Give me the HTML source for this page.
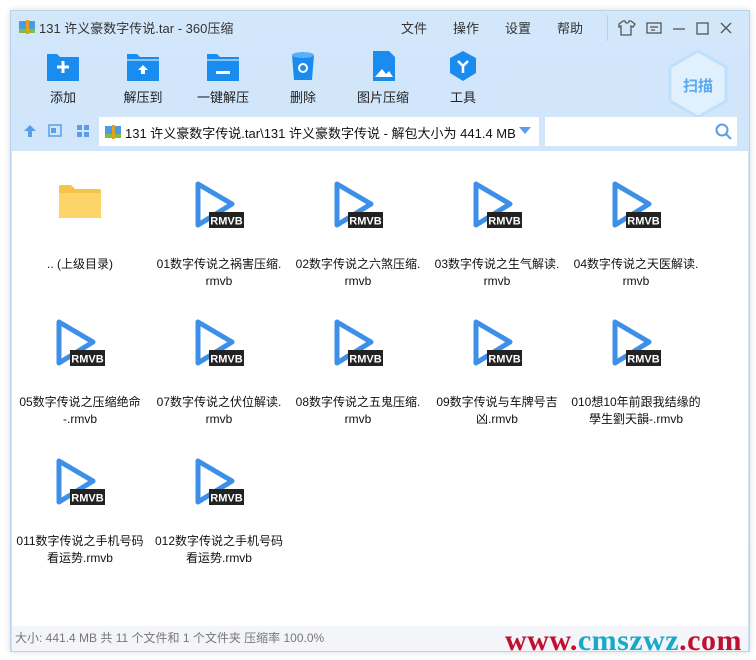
<!DOCTYPE html><html><head><meta charset="utf-8"><style>
body{margin:0;width:756px;height:660px;background:#fff;position:relative;overflow:hidden;font-family:"Liberation Sans","Noto Sans CJK SC",sans-serif;}
.win{position:absolute;left:10px;top:10px;width:738px;height:640px;background:linear-gradient(#d3e7fb,#c9e1f8);border:1px solid #b8d4ee;box-shadow:0 0 6px rgba(0,0,0,.15);}
.t{position:absolute;white-space:nowrap;}
.tool{position:absolute;top:40px;width:80px;text-align:center;font-size:13px;color:#222;white-space:nowrap;}
.tool .ic{display:block;width:32px;height:30px;margin:0 auto 6px;}
.content{position:absolute;left:1px;top:140px;width:736px;height:475px;background:#fff;}
.status{position:absolute;left:1px;top:615px;width:736px;height:25px;background:#f3f5f8;font-size:12px;color:#777;line-height:25px;padding-left:3px;box-sizing:border-box;}
.item{position:absolute;width:136px;text-align:center;font-size:12px;color:#111;line-height:17px;}
</style></head><body>
<div class="win">
<svg class="t" style="left:8px;top:8px" width="16" height="16"><rect x="0" y="2" width="16" height="12" fill="#4a9be6"/><rect x="0" y="10" width="16" height="4" fill="#7bc043"/><rect x="7" y="1" width="3" height="14" fill="#e0a020"/></svg>
<div class="t" style="left:28px;top:7px;font-size:13px;color:#333">131 许义豪数字传说.tar - 360压缩</div>
<div class="t" style="left:390px;top:7px;font-size:13px;color:#333">文件</div>
<div class="t" style="left:442px;top:7px;font-size:13px;color:#333">操作</div>
<div class="t" style="left:494px;top:7px;font-size:13px;color:#333">设置</div>
<div class="t" style="left:546px;top:7px;font-size:13px;color:#333">帮助</div>
<svg class="t" style="left:596px;top:4px" width="140" height="26" fill="none" stroke="#555" stroke-width="1.3"><line x1="0" y1="0" x2="0" y2="26" stroke="#aac4dc"/><path d="M12 9l4-3h2a2 2 0 004 0h2l4 3-2 3-2-1v9h-10v-9l-2 1z"/><rect x="40" y="8" width="14" height="10"/><line x1="43" y1="12" x2="51" y2="12"/><line x1="44" y1="15" x2="48" y2="15"/><line x1="66" y1="14" x2="78" y2="14"/><rect x="90" y="8" width="11" height="11"/><path d="M114 8l10 10M124 8l-10 10"/></svg>
<div class="tool" style="left:12px"><svg class="ic" viewBox="0 0 32 30"><path d="M0 3h10l3 3h19v24H0z" fill="#1a8cf0"/><path d="M16 10v12M10 16h12" stroke="#fff" stroke-width="3"/></svg>添加</div>
<div class="tool" style="left:92px"><svg class="ic" viewBox="0 0 32 30"><path d="M0 3h10l3 3h19v24H0z" fill="#1a8cf0"/><rect x="0" y="8" width="32" height="2" fill="#8cc6f7"/><path d="M16 14l-5 5h3v4h4v-4h3z" fill="#fff"/></svg>解压到</div>
<div class="tool" style="left:172px"><svg class="ic" viewBox="0 0 32 30"><path d="M0 3h10l3 3h19v24H0z" fill="#1a8cf0"/><rect x="0" y="8" width="32" height="2" fill="#8cc6f7"/><rect x="9" y="20" width="14" height="3" fill="#fff"/></svg>一键解压</div>
<div class="tool" style="left:252px"><svg class="ic" viewBox="0 0 32 30"><path d="M5 4h22l-2 25H7z" fill="#1a8cf0"/><ellipse cx="16" cy="4" rx="11" ry="3" fill="#5cb0f7"/><circle cx="16" cy="17" r="4" fill="none" stroke="#fff" stroke-width="2"/></svg>删除</div>
<div class="tool" style="left:332px"><svg class="ic" viewBox="0 0 32 30"><path d="M6 0h16l6 6v24H6z" fill="#1a8cf0"/><path d="M8 26l7-8 4 5 3-3 4 6z" fill="#fff"/></svg>图片压缩</div>
<div class="tool" style="left:412px"><svg class="ic" viewBox="0 0 32 30"><path d="M16 0l13 7v15l-13 8-13-8V7z" fill="#1a8cf0"/><path d="M11 10l5 5 5-5M16 15v7" stroke="#fff" stroke-width="2.5" fill="none"/></svg>工具</div>
<svg class="t" style="left:655px;top:38px" width="64" height="70"><path d="M32 2l28 16v34L32 68 4 52V18z" fill="#e0f0fd" stroke="#bfe0fb" stroke-width="3"/><text x="32" y="42" text-anchor="middle" font-size="15" font-weight="bold" fill="#5aa8ee" font-family="Noto Sans CJK SC,sans-serif">扫描</text></svg>
<svg class="t" style="left:12px;top:112px" width="70" height="16"><path d="M7 2l-6 6h4v6h4V8h4z" fill="#5a9ee6"/><rect x="26" y="2" width="12" height="11" fill="none" stroke="#5a9ee6" stroke-width="1.5"/><rect x="28" y="5" width="5" height="5" fill="#5a9ee6"/><rect x="54" y="2" width="5" height="5" fill="#5a9ee6"/><rect x="61" y="2" width="5" height="5" fill="#5a9ee6"/><rect x="54" y="9" width="5" height="5" fill="#5a9ee6"/><rect x="61" y="9" width="5" height="5" fill="#5a9ee6"/></svg>
<div class="t" style="left:88px;top:106px;width:440px;height:29px;background:#fff;"></div>
<svg class="t" style="left:94px;top:113px" width="16" height="16"><rect x="0" y="2" width="16" height="12" fill="#4a9be6"/><rect x="0" y="10" width="16" height="4" fill="#7bc043"/><rect x="7" y="1" width="3" height="14" fill="#e0a020"/></svg>
<div class="t" style="left:114px;top:112px;font-size:13px;color:#111">131 许义豪数字传说.tar\131 许义豪数字传说 - 解包大小为 441.4 MB</div>
<svg class="t" style="left:508px;top:116px" width="12" height="8"><path d="M0 0h12L6 7z" fill="#5a9ee6"/></svg>
<div class="t" style="left:534px;top:106px;width:192px;height:29px;background:#fff;"></div>
<svg class="t" style="left:704px;top:112px" width="18" height="18" fill="none" stroke="#5a9ee6" stroke-width="2"><circle cx="7" cy="7" r="5.5"/><path d="M11 11l5 5"/></svg>
<div class="content"></div>
<div class="status">大小: 441.4 MB 共 11 个文件和 1 个文件夹 压缩率 100.0%</div>
</div>
<div class="t" style="left:505px;top:624px;font-family:'Liberation Serif',serif;font-weight:bold;font-size:30px;color:#c01030;letter-spacing:0.5px">www.<span style="color:#18a8c8">cmszwz</span>.com</div>
<svg style="position:absolute;left:58px;top:184px" width="44" height="36"><path d="M1 3a2 2 0 012-2h10l4 4h24a2 2 0 012 2v27H1z" fill="#f5c24a"/><path d="M1 9h42v25H1z" fill="#fcd468"/></svg>
<div class="item" style="left:12px;top:256px">.. (上级目录)</div>
<div id="g"></div>
<script>
var names=["01数字传说之祸害压缩.<br>rmvb","02数字传说之六煞压缩.<br>rmvb","03数字传说之生气解读.<br>rmvb","04数字传说之天医解读.<br>rmvb","05数字传说之压缩绝命<br>-.rmvb","07数字传说之伏位解读.<br>rmvb","08数字传说之五鬼压缩.<br>rmvb","09数字传说与车牌号吉<br>凶.rmvb","010想10年前跟我结缘的<br>學生劉天韻-.rmvb","011数字传说之手机号码<br>看运势.rmvb","012数字传说之手机号码<br>看运势.rmvb"];
var cx=[80,219,358,497,636],ty=[180,318,457],h="";
for(var i=0;i<11;i++){var p=i+1,c=p%5,r=Math.floor(p/5),x=cx[c],y=ty[r];
h+='<svg style="position:absolute;left:'+(x-24)+'px;top:'+y+'px" width="52" height="50"><path d="M3 4L37 24 3 45z" fill="none" stroke="#3d8fe8" stroke-width="5" stroke-linejoin="round"/><rect x="14" y="32" width="35" height="16" fill="#222"/><text x="31.5" y="44.5" text-anchor="middle" fill="#fff" font-size="11" font-weight="bold" font-family="Liberation Sans,sans-serif">RMVB</text></svg>';
h+='<div class="item" style="left:'+(x-68)+'px;top:'+(y+76)+'px">'+names[i]+'</div>';}
document.getElementById("g").innerHTML=h;
</script>
</body></html>
